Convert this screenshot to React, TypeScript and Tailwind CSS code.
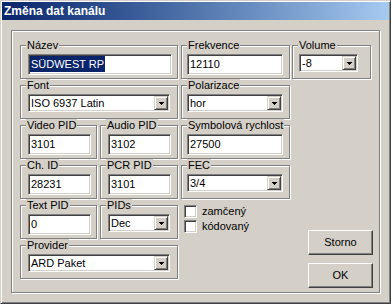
import type { ReactNode } from "react";

// classic win2000 bevels
const etched = "border border-[#808080] shadow-[inset_1px_1px_0_#fff,1px_1px_0_#fff]";
const sunken =
  "bg-white border border-t-[#808080] border-l-[#808080] border-r-white border-b-white shadow-[inset_1px_1px_0_#404040,inset_-1px_-1px_0_#d4d0c8]";
const raised =
  "bg-[#d4d0c8] border border-t-white border-l-white border-r-[#404040] border-b-[#404040] shadow-[inset_-1px_-1px_0_#808080]";

function Group({ label, className = "", children }: { label: string; className?: string; children?: ReactNode }) {
  return (
    <div className={`relative h-[34px] pt-[8px] ${etched} ${className}`}>
      <span className="absolute -top-[7px] left-[5px] bg-[#d4d0c8] px-px leading-[13px] whitespace-nowrap">{label}</span>
      {children}
    </div>
  );
}

function Edit({ value, className = "", selected }: { value: string; className?: string; selected?: boolean }) {
  return (
    <div className={`h-[21px] pl-[1px] pt-[1px] ${sunken} ${className}`}>
      {selected ? (
        <span className="inline-block bg-[#0a246a] text-white leading-[16px] pl-px pr-px">{value}</span>
      ) : (
        <span className="inline-block pl-px leading-[17px]">{value}</span>
      )}
    </div>
  );
}

function Arrow() {
  return (
    <svg width="5" height="3" viewBox="0 0 5 3" shapeRendering="crispEdges">
      <rect x="0" y="0" width="5" height="1" fill="#000" />
      <rect x="1" y="1" width="3" height="1" fill="#000" />
      <rect x="2" y="2" width="1" height="1" fill="#000" />
    </svg>
  );
}

function Combo({ value, className = "" }: { value: string; className?: string }) {
  return (
    <div className={`flex h-[18px] ${sunken} ${className}`}>
      <span className="flex-1 pl-[2px] leading-[16px] whitespace-nowrap overflow-hidden">{value}</span>
      <div
        className={`m-px flex h-[14px] w-[14px] items-center justify-center bg-[#d4d0c8] border border-t-[#d4d0c8] border-l-[#d4d0c8] border-r-[#404040] border-b-[#404040] shadow-[inset_1px_1px_0_#fff,inset_-1px_-1px_0_#808080]`}
      >
        <Arrow />
      </div>
    </div>
  );
}

function Check({ label }: { label: string }) {
  return (
    <div className="flex h-[15px] items-start gap-[5px]">
      <div className={`h-[13px] w-[13px] ${sunken}`} />
      <span className="leading-[13px]">{label}</span>
    </div>
  );
}

function Button({ label }: { label: string }) {
  return <div className={`flex h-[25px] w-[65px] items-center justify-center ${raised}`}>{label}</div>;
}

export default function App() {
  return (
    <div className="h-[304px] w-[391px] overflow-hidden bg-[#d4d0c8] border border-[#d4d0c8] border-r-[#404040] border-b-[#404040] shadow-[inset_1px_1px_0_#fff,inset_-1px_-1px_0_#808080] p-px font-['Liberation_Sans',Arial,sans-serif] text-[11px] text-black">
      {/* title bar */}
      <div className="flex h-[18px] items-center bg-linear-to-r from-[#0a246a] to-[#a6caf0] pl-[2px]">
        <span className="text-[12px] font-bold leading-[18px] text-white">Změna dat kanálu</span>
      </div>

      {/* main panel */}
      <div className={`ml-[9px] mt-[10px] flex h-[263px] w-[369px] pl-[8px] pt-[14px] ${etched}`}>
        {/* left column */}
        <div className="flex w-[158px] flex-col gap-[6px]">
          <Group label="Název">
            <Edit value="SÜDWEST RP" selected className="ml-[7px] w-[144px]" />
          </Group>
          <Group label="Font">
            <Combo value="ISO 6937 Latin" className="ml-[7px] w-[142px]" />
          </Group>
          <div className="flex gap-[3px]">
            <Group label="Video PID" className="w-[77px]">
              <Edit value="3101" className="ml-[7px] w-[63px]" />
            </Group>
            <Group label="Audio PID" className="w-[78px]">
              <Edit value="3102" className="ml-[7px] w-[63px]" />
            </Group>
          </div>
          <div className="flex gap-[3px]">
            <Group label="Ch. ID" className="w-[77px]">
              <Edit value="28231" className="ml-[7px] w-[63px]" />
            </Group>
            <Group label="PCR PID" className="w-[78px]">
              <Edit value="3101" className="ml-[7px] w-[63px]" />
            </Group>
          </div>
          <div className="flex gap-[3px]">
            <Group label="Text PID" className="w-[77px]">
              <Edit value="0" className="ml-[7px] w-[63px]" />
            </Group>
            <Group label="PIDs" className="w-[78px]">
              <Combo value="Dec" className="ml-[7px] w-[62px]" />
            </Group>
          </div>
          <Group label="Provider">
            <Combo value="ARD Paket" className="ml-[7px] w-[142px]" />
          </Group>
        </div>

        {/* right column */}
        <div className="ml-[3px] flex flex-1 flex-col gap-[6px]">
          <div className="flex gap-[2px]">
            <Group label="Frekvence" className="w-[109px]">
              <Edit value="12110" className="ml-[5px] w-[96px]" />
            </Group>
            <Group label="Volume" className="w-[79px]">
              <Combo value="-8" className="ml-[6px] w-[59px]" />
            </Group>
          </div>
          <Group label="Polarizace" className="w-[109px]">
            <Combo value="hor" className="ml-[5px] w-[96px]" />
          </Group>
          <Group label="Symbolová rychlost" className="w-[109px]">
            <Edit value="27500" className="ml-[5px] w-[96px]" />
          </Group>
          <Group label="FEC" className="w-[109px]">
            <Combo value="3/4" className="ml-[5px] w-[96px]" />
          </Group>
          <div className="flex">
            <div className="ml-[3px] flex flex-col">
              <Check label="zamčený" />
              <Check label="kódovaný" />
            </div>
            <div className="ml-auto mr-[6px] mt-[25px] flex flex-col gap-[8px]">
              <Button label="Storno" />
              <Button label="OK" />
            </div>
          </div>
        </div>
      </div>
    </div>
  );
}
